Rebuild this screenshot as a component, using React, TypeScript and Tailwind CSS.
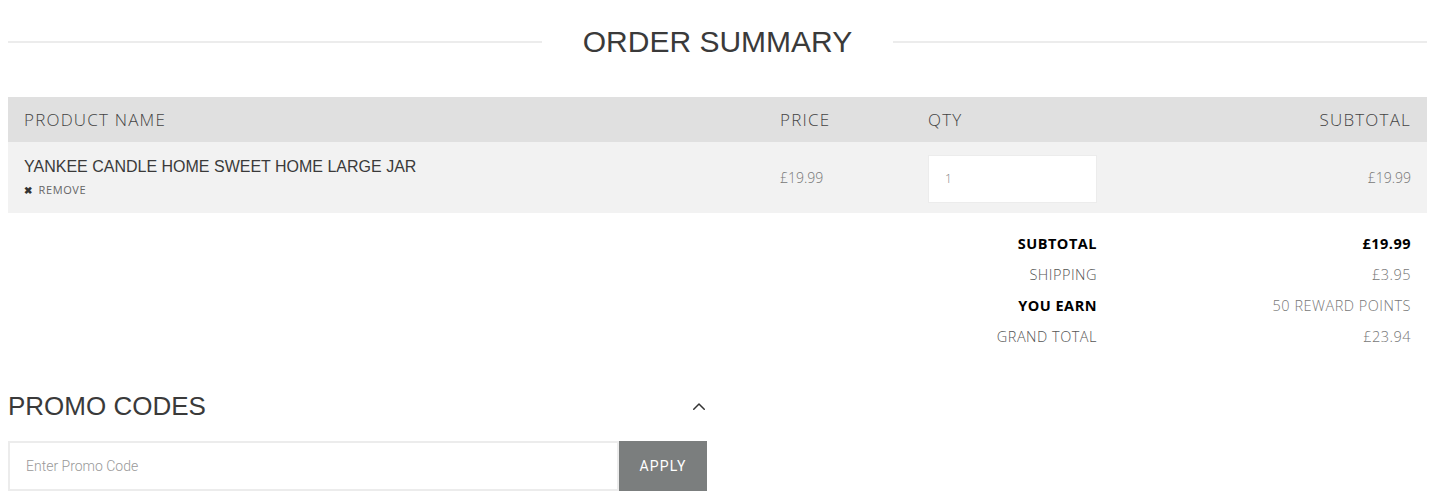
import React from 'react'

const SANS = "font-['Open_Sans',sans-serif]"
const ARIAL = "font-['Liberation_Sans',Arial,sans-serif]"

const TOTALS = [
  { label: 'SUBTOTAL', value: '£19.99', labelBold: true, valueBold: true },
  { label: 'SHIPPING', value: '£3.95' },
  { label: 'YOU EARN', value: '50 REWARD POINTS', labelBold: true },
  { label: 'GRAND TOTAL', value: '£23.94' },
]

export default function App() {
  return (
    <div className="min-h-screen bg-white pb-4 pl-2 pr-[6px]">
      {/* Title */}
      <div className="flex h-[84px] items-center">
        <div className="h-[2px] flex-1 bg-[#ececec]" />
        <h1 className={`${ARIAL} px-[41px] text-[30px] leading-none text-[#3a3a3a]`}>ORDER SUMMARY</h1>
        <div className="h-[2px] flex-1 bg-[#ececec]" />
      </div>

      {/* Cart table */}
      <div className="mt-[13px]">
        <div className={`${SANS} grid h-[45px] grid-cols-[756px_148px_201px_1fr] items-center bg-[#e0e0e0] text-[17px] font-light tracking-[1.2px] text-[#444]`}>
          <div className="px-4">PRODUCT NAME</div>
          <div className="px-4">PRICE</div>
          <div className="px-4">QTY</div>
          <div className="px-4 text-right">SUBTOTAL</div>
        </div>
        <div className="grid h-[71px] grid-cols-[756px_148px_201px_1fr] items-center bg-[#f2f2f2]">
          <div className="px-4">
            <div className={`${ARIAL} text-[16px] leading-tight text-[#3a3a3a]`}>
              YANKEE CANDLE HOME SWEET HOME LARGE JAR
            </div>
            <button className={`${SANS} mt-[5px] flex items-center gap-[6px] text-[11px] tracking-[0.6px] text-[#666]`}>
              <span className="text-[10px] font-bold text-[#333]">✖</span>
              REMOVE
            </button>
          </div>
          <div className={`${SANS} px-4 text-[14px] font-light text-[#777]`}>£19.99</div>
          <div className="px-4">
            <input
              defaultValue="1"
              className={`${SANS} mt-[2px] h-[48px] w-full border border-[#ececec] bg-white px-4 text-[12px] font-light text-[#888] outline-none`}
            />
          </div>
          <div className={`${SANS} px-4 text-right text-[14px] font-light text-[#777]`}>£19.99</div>
        </div>
      </div>

      {/* Totals */}
      <div className={`${SANS} mt-[15px] text-[14.5px] tracking-[0.5px]`}>
        {TOTALS.map((t) => (
          <div key={t.label} className="grid h-[31px] grid-cols-[756px_148px_201px_1fr] items-center">
            <div className="col-span-3 px-4 text-right">
              <span className={t.labelBold ? 'font-bold text-black' : 'font-light text-[#555]'}>{t.label}</span>
            </div>
            <div className="px-4 text-right">
              <span className={t.valueBold ? 'font-bold text-black' : 'font-light text-[#777]'}>{t.value}</span>
            </div>
          </div>
        ))}
      </div>

      {/* Promo codes */}
      <div className="mt-[41px] w-[699px]">
        <div className="flex items-center justify-between">
          <h2 className={`${ARIAL} text-[26px] leading-none text-[#3a3a3a]`}>PROMO CODES</h2>
          <svg width="18" height="18" viewBox="0 0 24 24" fill="none" stroke="#333" strokeWidth="2" strokeLinecap="round" strokeLinejoin="round" className="mr-[-1px] mt-[2px]">
            <path d="M5 15l7-7 7 7" />
          </svg>
        </div>
        <div className="mt-[22px] flex h-[50px]">
          <input
            placeholder="Enter Promo Code"
            className="h-full flex-1 border-2 border-[#ececec] bg-white px-4 font-['Roboto',sans-serif] text-[14px] font-light text-[#555] outline-none placeholder:text-[#999]"
          />
          <button className="h-full w-[88px] bg-[#7b7e7e] font-['Roboto',sans-serif] text-[14px] tracking-[1.2px] text-white">
            APPLY
          </button>
        </div>
      </div>
    </div>
  )
}
